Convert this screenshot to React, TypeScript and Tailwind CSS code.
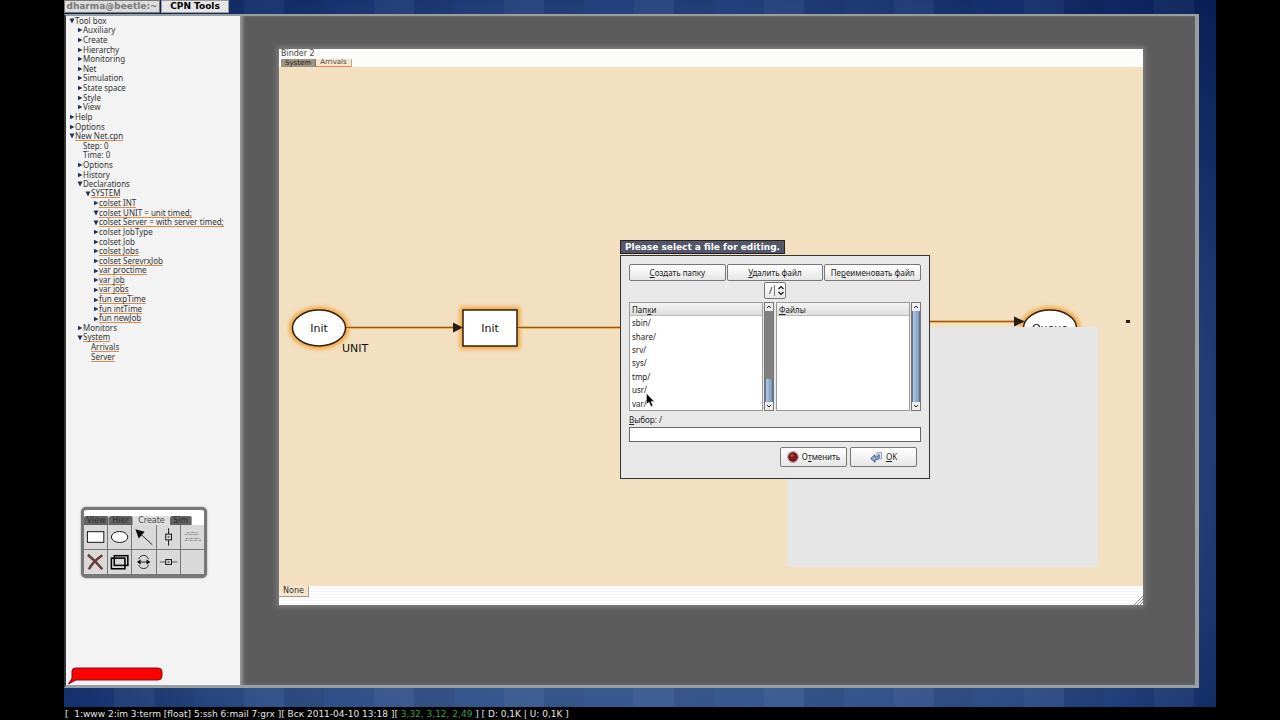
import type { ReactNode } from "react";
import clsx from "clsx";

interface TreeRow {
  label: string;
  level: 0 | 1 | 2 | 3;
  state?: "open" | "closed";
  changed?: boolean;
}

const TREE: TreeRow[] = [
  { label: "Tool box", level: 0, state: "open" },
  { label: "Auxiliary", level: 1, state: "closed" },
  { label: "Create", level: 1, state: "closed" },
  { label: "Hierarchy", level: 1, state: "closed" },
  { label: "Monitoring", level: 1, state: "closed" },
  { label: "Net", level: 1, state: "closed" },
  { label: "Simulation", level: 1, state: "closed" },
  { label: "State space", level: 1, state: "closed" },
  { label: "Style", level: 1, state: "closed" },
  { label: "View", level: 1, state: "closed" },
  { label: "Help", level: 0, state: "closed" },
  { label: "Options", level: 0, state: "closed" },
  { label: "New Net.cpn", level: 0, state: "open", changed: true },
  { label: "Step: 0", level: 1 },
  { label: "Time: 0", level: 1 },
  { label: "Options", level: 1, state: "closed" },
  { label: "History", level: 1, state: "closed" },
  { label: "Declarations", level: 1, state: "open" },
  { label: "SYSTEM", level: 2, state: "open", changed: true },
  { label: "colset INT", level: 3, state: "closed", changed: true },
  { label: "colset UNIT = unit timed;", level: 3, state: "open", changed: true },
  { label: "colset Server = with server timed;", level: 3, state: "open", changed: true },
  { label: "colset JobType", level: 3, state: "closed" },
  { label: "colset Job", level: 3, state: "closed" },
  { label: "colset Jobs", level: 3, state: "closed", changed: true },
  { label: "colset SerevrxJob", level: 3, state: "closed", changed: true },
  { label: "var proctime", level: 3, state: "closed", changed: true },
  { label: "var job", level: 3, state: "closed", changed: true },
  { label: "var jobs", level: 3, state: "closed", changed: true },
  { label: "fun expTime", level: 3, state: "closed", changed: true },
  { label: "fun intTime", level: 3, state: "closed", changed: true },
  { label: "fun newJob", level: 3, state: "closed", changed: true },
  { label: "Monitors", level: 1, state: "closed" },
  { label: "System", level: 1, state: "open", changed: true },
  { label: "Arrivals", level: 2, changed: true },
  { label: "Server", level: 2, changed: true },
];

const INDENT = ["pl-[3px]", "pl-[11px]", "pl-[19px]", "pl-[27px]"];

const FOLDERS = ["sbin/", "share/", "srv/", "sys/", "tmp/", "usr/", "var/"];

const Marker = ({ state }: { state?: "open" | "closed" }) => (
  <svg viewBox="0 0 6 6" className="size-[6px] shrink-0 fill-[#22305c]" aria-hidden="true">
    {state === "open" && <path d="M0.5 0.5h5L3 5.5z" />}
    {state === "closed" && <path d="M1 0.8v4.4L5.5 3z" />}
  </svg>
);

const Tree = () => (
  <ul className="grid h-[346px] auto-rows-fr font-['Noto_Sans',sans-serif] text-[8px] leading-[8px] text-[#333]">
    {TREE.map((row, i) => (
      <li key={i} className={clsx("flex items-center whitespace-nowrap", INDENT[row.level])}>
        <Marker state={row.state} />
        <span className={clsx(row.changed && "border-b border-[#e38a4c]")}>{row.label}</span>
      </li>
    ))}
  </ul>
);

const TOOLS: { name: string; icon: ReactNode }[] = [
  {
    name: "Transition",
    icon: <rect x="3.5" y="6.5" width="17" height="11" fill="#fff" stroke="#111" />,
  },
  {
    name: "Place",
    icon: <ellipse cx="12" cy="12" rx="8.5" ry="5.7" fill="#fff" stroke="#111" />,
  },
  {
    name: "Arc",
    icon: (
      <>
        <path d="M9 9l12 11" stroke="#222" />
        <path d="M3.5 4l9.5 2.5-6 7z" fill="#000" />
      </>
    ),
  },
  {
    name: "Vertical guideline",
    icon: (
      <g stroke="#111" fill="none">
        <path d="M12 3v6M12 15v6" />
        <rect x="9" y="9" width="6" height="6" />
        <path d="M11 12h2" />
      </g>
    ),
  },
  {
    name: "Text label",
    icon: (
      <g stroke="#666" fill="none" strokeDasharray="2 1 1 1">
        <path d="M4 9.5h15M6 7.5h11M4 15.5h17M5 13.5h14" strokeWidth="0.8" />
      </g>
    ),
  },
  {
    name: "Delete",
    icon: <path d="M4 4.500c5 4 10 9 15 15M19 5C13 9 8 14 5 19.500" stroke="#6b3a38" strokeWidth="2.6" fill="none" />,
  },
  {
    name: "Clone",
    icon: (
      <g stroke="#000" strokeWidth="1.6" fill="none">
        <rect x="3.5" y="8" width="14" height="11" />
        <rect x="6.5" y="5.5" width="14" height="10" />
      </g>
    ),
  },
  {
    name: "Toggle arc direction",
    icon: (
      <>
        <path d="M7 9c1-5 9-5 10 0M7 15c1 5 9 5 10 0" stroke="#222" fill="none" />
        <path d="M9 12h6" stroke="#222" />
        <path d="M9 9.5v5L5 12zM15 9.5v5l4-2.5z" fill="#000" />
      </>
    ),
  },
  {
    name: "Horizontal guideline",
    icon: (
      <g stroke="#111" fill="none">
        <path d="M3 12h6M15 12h6" stroke="#555" />
        <rect x="9" y="9.5" width="6" height="5" />
        <path d="M11 12h2" />
      </g>
    ),
  },
];

const PALETTE_TABS = [
  { label: "View", width: "w-[25px]" },
  { label: "Hier", width: "w-[24px]" },
  { label: "Create", width: "w-[37px]", active: true },
  { label: "Sim", width: "w-[22px]" },
];

const Palette = () => (
  <div className="mt-auto mb-[89px] ml-[15px] w-[126px] rounded-[5px] border-3 border-b-4 border-[#777] bg-white pt-[6px] shadow-[0_0_2px_#888]">
    <div className="flex h-[9px] font-['DejaVu_Sans',sans-serif] text-[8px] leading-[9px]">
      {PALETTE_TABS.map((tab) => (
        <button
          key={tab.label}
          type="button"
          className={clsx(
            "h-[9px] rounded-t-[2px] text-center",
            tab.width,
            tab.active ? "bg-[#dedede] text-[#444]" : "border-r border-[#999] bg-[#636363] text-[#2b2b2b]",
          )}
        >
          {tab.label}
        </button>
      ))}
    </div>
    <div className="grid grid-cols-5 gap-px bg-[#777]">
      {TOOLS.map((tool) => (
        <button key={tool.name} type="button" aria-label={tool.name} className="h-6 bg-[#d9d9d9]">
          <svg viewBox="0 0 24 24" className="size-full">
            {tool.icon}
          </svg>
        </button>
      ))}
      <div className="h-6 bg-[#d9d9d9]" />
    </div>
  </div>
);

const Sidebar = () => (
  <aside className="flex w-[174px] shrink-0 flex-col bg-[#f3f3f3]">
    <Tree />
    <Palette />
    <svg viewBox="0 0 98 18" className="h-[18px] w-[98px]" aria-hidden="true">
      <path
        d="M10 1h82q4 0 4 4v4q0 4-4 4H10L2.500 17 6 11V4q0-3 4-3z"
        fill="#fd0000"
        stroke="#7a1020"
      />
    </svg>
  </aside>
);

const NetDiagram = () => (
  <svg className="absolute inset-0 size-full font-['DejaVu_Sans',sans-serif] text-[11px]">
    <defs>
      <filter id="glow" x="-30%" y="-30%" width="160%" height="160%">
        <feGaussianBlur stdDeviation="2" />
      </filter>
    </defs>

    <g fill="none" stroke="#f2a23a" strokeWidth="6" filter="url(#glow)">
      <ellipse cx="40" cy="261" rx="27" ry="18" />
      <rect x="184" y="243" width="54" height="36" />
      <ellipse cx="771" cy="261" rx="27" ry="18" />
    </g>

    <g stroke="#e8b163" strokeWidth="3">
      <path d="M67 260.500h114M238 260.500h105M650 254.500h86" />
    </g>
    <g stroke="#8f5a1c">
      <path d="M67 260.500h114M238 260.500h105M650 254.500h86" />
    </g>
    <g fill="#2a1a10">
      <path d="M174 255.500l10 5-10 5zM735 249.500l11 5-11 5z" />
      <rect x="847" y="253" width="4" height="3" />
    </g>

    <g fill="#fff" stroke="#2f2010" strokeWidth="1.5">
      <ellipse cx="40" cy="261" rx="26.5" ry="18" />
      <rect x="184" y="243" width="54" height="36" />
      <ellipse cx="771" cy="261" rx="26.5" ry="18" />
    </g>

    <g fill="#111" textAnchor="middle">
      <text x="40" y="265">Init</text>
      <text x="211" y="265">Init</text>
      <text x="771" y="265">Queue</text>
      <text x="76" y="285">UNIT</text>
    </g>
  </svg>
);

const Binder = () => (
  <section className="flex flex-1 flex-col bg-[#fcfcfa] shadow-[0_0_5px_2px_#808080]">
    <header className="h-[18px] pl-[2px] font-['DejaVu_Sans',sans-serif] text-[8px] leading-[9px] text-[#444]">
      <h1 className="leading-[10px]">Binder 2</h1>
      <div className="flex">
        <button type="button" className="h-[8px] w-[35px] border-r border-[#777] bg-[#9d9482] text-[7px] leading-[8px] text-[#222]">
          System
        </button>
        <button type="button" className="h-[8px] w-[36px] border-r border-[#aaa] bg-[#f7e6cd] text-[7px]">
          <span className="block border-b border-[#e38a4c] leading-[7px]">Arrivals</span>
        </button>
      </div>
    </header>
    <div className="relative flex-1 overflow-hidden bg-[#f3e0c0]">
      <NetDiagram />
      <div className="absolute top-[260px] left-[508px] h-[240px] w-[311px] bg-[#e6e6e6]" />
    </div>
    <footer className="flex h-[19px] items-start justify-between bg-[repeating-linear-gradient(#fff_0_2px,#f4f4f4_2px_3px)]">
      <button type="button" className="h-[11px] w-[30px] border-r border-b border-[#a99] bg-[#f7e6cd] font-['DejaVu_Sans',sans-serif] text-[8px] leading-[10px] text-[#333]">
        None
      </button>
      <svg viewBox="0 0 9 9" className="size-[9px] self-end" stroke="#888" aria-hidden="true">
        <path d="M0 9l9-9M3 9l6-6M6 9l3-3" />
      </svg>
    </footer>
  </section>
);

const BUTTON =
  "flex items-center justify-center rounded-[2px] border border-[#777] bg-linear-to-b from-white to-[#e6e6e6] whitespace-nowrap";

const Scrollbar = ({ partial }: { partial?: boolean }) => (
  <div className="flex w-[10px] shrink-0 flex-col border border-[#777] bg-[#808080]">
    <div className="flex h-[8px] items-center justify-center bg-[#ededed]">
      <svg viewBox="0 0 6 4" className="h-[4px] w-[6px]" fill="none" stroke="#222">
        <path d="M1 3l2-2 2 2" />
      </svg>
    </div>
    <div
      className={clsx(
        "mt-auto border-x border-[#5a6f92] bg-linear-to-r from-[#b4c8e2] to-[#7d97bd]",
        partial ? "h-[23px]" : "flex-1",
      )}
    />
    <div className="flex h-[8px] items-center justify-center bg-[#ededed]">
      <svg viewBox="0 0 6 4" className="h-[4px] w-[6px]" fill="none" stroke="#222">
        <path d="M1 1l2 2 2-2" />
      </svg>
    </div>
  </div>
);

const FileList = ({ title, items, partial }: { title: ReactNode; items: string[]; partial?: boolean }) => (
  <div className="flex h-[109px] flex-1 gap-px">
    <div className="flex flex-1 flex-col border border-[#999] bg-white">
      <div className="h-[13px] border-b border-[#bbb] bg-linear-to-b from-[#f4f4f4] to-[#dedede] px-[2px] leading-[13px]">
        {title}
      </div>
      <ul className="grid flex-1 auto-rows-fr px-[2px]">
        {items.map((item) => (
          <li key={item} className="flex items-center leading-[9px]">
            {item}
          </li>
        ))}
      </ul>
    </div>
    <Scrollbar partial={partial} />
  </div>
);

const FileDialog = () => (
  <div
    role="dialog"
    aria-labelledby="dialog-title"
    className="absolute top-[240px] left-[556px] w-[310px] font-['Noto_Sans',sans-serif] text-[8px] text-[#222]"
  >
    <h2
      id="dialog-title"
      className="mb-px h-[14px] w-[165px] border border-[#222] bg-[#54566a] text-center font-['DejaVu_Sans',sans-serif] text-[9px] leading-[13px] font-bold whitespace-nowrap text-white"
    >
      Please select a file for editing.
    </h2>
    <form className="border border-[#333] bg-[#e8e8e8] px-2 pt-2 pb-[11px]">
      <div className="grid grid-cols-3 gap-px">
        <button type="button" className={clsx(BUTTON, "h-[17px]")}>
          <span><u>С</u>оздать папку</span>
        </button>
        <button type="button" className={clsx(BUTTON, "h-[17px]")}>
          <span><u>У</u>далить файл</span>
        </button>
        <button type="button" className={clsx(BUTTON, "h-[17px]")}>
          <span>Пе<u>р</u>еименовать файл</span>
        </button>
      </div>

      <div className="relative mx-auto mt-px h-[17px] w-[22px]">
        <select
          aria-label="Каталог"
          className="size-full appearance-none rounded-[2px] border border-[#777] bg-linear-to-b from-white to-[#e6e6e6] pl-[4px] text-[9px]"
        >
          <option>/</option>
        </select>
        <svg viewBox="0 0 12 13" className="pointer-events-none absolute top-[2px] right-[1px] h-[13px] w-[12px]" fill="none" stroke="#111" strokeWidth="1.2">
          <path d="M1.500 1v11" stroke="#777" strokeWidth="1" />
          <path d="M5.500 5L8 2.500 10.500 5M5.500 8L8 10.500 10.500 8" />
        </svg>
      </div>

      <div className="mt-[3px] flex gap-[2px]">
        <FileList title={<span>Пап<u>к</u>и</span>} items={FOLDERS} partial />
        <FileList title={<span><u>Ф</u>айлы</span>} items={[]} />
      </div>

      <label htmlFor="selection" className="mt-[2px] mb-px block leading-[13px]">
        <u>В</u>ыбор: /
      </label>
      <input id="selection" type="text" className="block h-[15px] w-full border border-[#666] bg-white px-1" />

      <div className="mt-[5px] flex justify-end gap-[3px] pr-[4px]">
        <button type="button" className={clsx(BUTTON, "h-[20px] w-[67px] gap-[3px]")}>
          <svg viewBox="0 0 12 12" className="size-[12px]">
            <circle cx="6" cy="6" r="5.5" fill="#e9c9c7" stroke="#a66" strokeWidth="0.6" />
            <circle cx="6" cy="6" r="4.2" fill="#8c1a1a" stroke="#3d0a0a" />
            <circle cx="5" cy="4.5" r="1.4" fill="#c24a44" />
          </svg>
          <span>О<u>т</u>менить</span>
        </button>
        <button type="submit" className={clsx(BUTTON, "h-[20px] w-[67px] gap-[3px]")}>
          <svg viewBox="0 0 13 12" className="h-[12px] w-[13px]">
            <path d="M7 1.500h4.500v6.500H7z" fill="#dce6f2" stroke="#7288a8" strokeWidth="0.7" />
            <path d="M0.700 7.500L5 3.700v2.300c2 .2 3.500-.5 4-2.500 1.300 3-.5 5.500-4 5.500v2.300z" fill="#8fadd3" stroke="#2d466f" strokeWidth="0.8" />
          </svg>
          <span><u>O</u>K</span>
        </button>
      </div>
    </form>

    <svg viewBox="0 0 9 15" className="absolute top-[153px] left-[26px] h-[15px] w-[9px]" aria-hidden="true">
      <path d="M0.500 0.500v10.500l2.500-2 2 4.500 1.800-.8L4.900 8.400h3.300z" fill="#000" stroke="#ddd" strokeWidth="0.5" />
    </svg>
  </div>
);

const WindowTabs = () => (
  <nav className="flex h-[14px] gap-px font-['DejaVu_Sans',sans-serif] text-[9px] leading-[11px] font-bold">
    <button type="button" className="h-[13px] w-[96px] border border-[#777] bg-[#dcdcdc] text-[#777]">
      dharma@beetle:~
    </button>
    <button type="button" className="h-[13px] w-[68px] border border-[#999] bg-[#e6e6e6] text-black">
      CPN Tools
    </button>
  </nav>
);

const StatusBar = () => (
  <footer className="h-[13px] bg-black pl-[65px] font-['DejaVu_Sans',sans-serif] text-[9px] leading-[14px] whitespace-pre text-[#e4e4e4]">
    {"[  1:www 2:im 3:term [float] 5:ssh 6:mail 7:grx ][ Вск 2011-04-10 13:18 ][ "}
    <span className="text-[#3f9a46]">3,32, 3,12, 2,49</span>
    {" ] [ D: 0,1K | U: 0,1K ]"}
  </footer>
);

export default function App() {
  return (
    <div className="flex h-screen flex-col overflow-hidden bg-black">
      <div className="relative mx-16 flex flex-1 flex-col bg-[repeating-linear-gradient(90deg,transparent_0_50px,#ffffff0a_50px_90px,#0000000d_90px_130px),radial-gradient(ellipse_at_50%_62%,#3a5a92_40%,#2d4c86_62%,#14306c_82%,#0a1f58_100%)] pr-[17px] pb-[19px]">
        <WindowTabs />
        <main className="flex flex-1 border-t-2 border-r-4 border-b-3 border-l-2 border-[#989fa0] border-l-[#333]">
          <Sidebar />
          <div className="flex flex-1 bg-[#5c5c5c] pt-[33px] pr-[52px] pb-[80px] pl-[39px] shadow-[inset_4px_0_4px_-2px_#aaa]">
            <Binder />
          </div>
        </main>
        <FileDialog />
      </div>
      <StatusBar />
    </div>
  );
}
